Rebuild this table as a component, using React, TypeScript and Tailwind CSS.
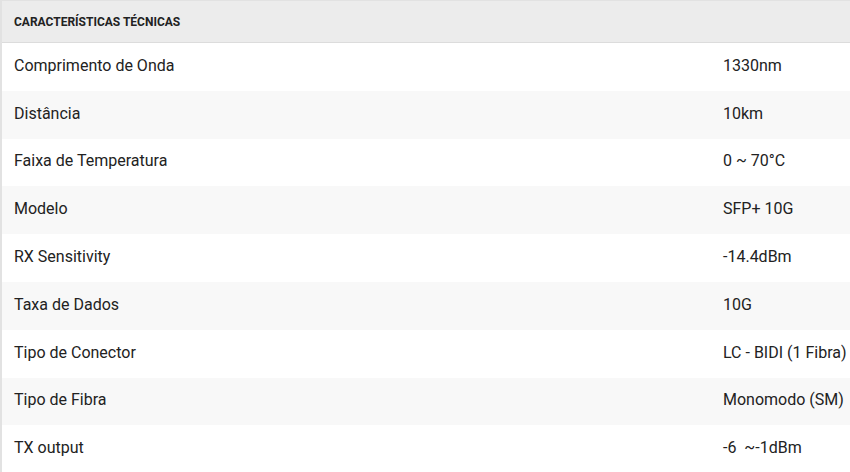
const specs: [string, string][] = [
  ["Comprimento de Onda", "1330nm"],
  ["Distância", "10km"],
  ["Faixa de Temperatura", "0 ~ 70°C"],
  ["Modelo", "SFP+ 10G"],
  ["RX Sensitivity", "-14.4dBm"],
  ["Taxa de Dados", "10G"],
  ["Tipo de Conector", "LC - BIDI (1 Fibra)"],
  ["Tipo de Fibra", "Monomodo (SM)"],
  ["TX output", "-6  ~-1dBm"],
];

export default function App() {
  return (
    <div className="h-[472px] w-[850px] overflow-hidden bg-white font-['Roboto',sans-serif] text-[#222]">
      <div className="w-[900px] border-l-2 border-t border-[#e2e2e2]">
        {/* Header */}
        <div className="flex h-[42px] items-center border-b border-[#dcdcdc] bg-[#ececec] pl-[12px]">
          <span className="text-[12px] font-bold uppercase text-[#222]">
            Características Técnicas
          </span>
        </div>

        {/* Rows */}
        {specs.map(([label, value], i) => (
          <div
            key={label}
            className={`flex h-[47.8px] items-center pb-[2px] text-[16px] ${
              i % 2 === 1 ? "bg-[#f8f8f8]" : "bg-white"
            }`}
          >
            <div className="w-[721px] shrink-0 pl-[12px]">{label}</div>
            <div className="whitespace-pre">{value}</div>
          </div>
        ))}
      </div>
    </div>
  );
}
